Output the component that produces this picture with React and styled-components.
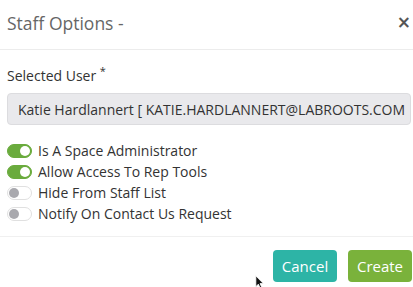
import React, { useState } from 'react';
import styled, { createGlobalStyle } from 'styled-components';

const GlobalStyle = createGlobalStyle`
  html, body {
    margin: 0;
    padding: 0;
    background: #fff;
    font-family: "Open Sans", "Liberation Sans", sans-serif;
  }
`;

const options = [
  { label: 'Is A Space Administrator', on: true },
  { label: 'Allow Access To Rep Tools', on: true },
  { label: 'Hide From Staff List', on: false },
  { label: 'Notify On Contact Us Request', on: false },
];

export default function App() {
  const [flags, setFlags] = useState(options.map((o) => o.on));

  function toggle(i) {
    setFlags(flags.map((f, idx) => (idx === i ? !f : f)));
  }

  return (
    <>
      <GlobalStyle />
      <Modal>
        <Header>
          <Title>Staff Options -</Title>
          <Close>×</Close>
        </Header>
        <Body>
          <Label>
            Selected User <Star>*</Star>
          </Label>
          <UserInput>Katie Hardlannert [ KATIE.HARDLANNERT@LABROOTS.COM</UserInput>
          <ToggleList>
            {options.map((o, i) => (
              <ToggleRow key={o.label} onClick={() => toggle(i)}>
                <Switch on={flags[i]}>
                  <Knob on={flags[i]} />
                </Switch>
                <ToggleLabel>{o.label}</ToggleLabel>
              </ToggleRow>
            ))}
          </ToggleList>
        </Body>
        <Footer>
          <Button color="#2db4a6">Cancel</Button>
          <Button color="#7ab23b">Create</Button>
          <Cursor viewBox="0 0 12 18">
            <path d="M1 1 L1 14 L4 11 L6.5 16.5 L8.5 15.6 L6 10.3 L10 10.3 Z" fill="#111" stroke="#fff" strokeWidth="1" />
          </Cursor>
        </Footer>
      </Modal>
    </>
  );
}

const Modal = styled.div`
  width: 413px;
  height: 287px;
  display: flex;
  flex-direction: column;
  background: #fff;
  overflow: hidden;
`;

const Header = styled.div`
  height: 49px;
  display: flex;
  align-items: center;
  justify-content: space-between;
  padding: 0 2px 0 7px;
  border-bottom: 1px solid #ececec;
`;

const Title = styled.h4`
  margin: 0;
  font-size: 17.5px;
  font-weight: 400;
  color: #666;
  margin-top: -3px;
`;

const Close = styled.span`
  font-family: "DejaVu Sans", sans-serif;
  font-size: 17px;
  font-weight: 700;
  color: #555;
  margin-top: -5px;
`;

const Body = styled.div`
  padding: 16px 2px 0 7px;
`;

const Label = styled.div`
  font-size: 14px;
  line-height: 20px;
  color: #333;
  margin-bottom: 7px;
`;

const Star = styled.sup`
  font-size: 11px;
  line-height: 0;
`;

const UserInput = styled.div`
  height: 32px;
  box-sizing: border-box;
  border: 1px solid #dcdcdf;
  border-radius: 4px;
  background: #e9e9ec;
  padding: 0 10px;
  display: flex;
  align-items: center;
  font-size: 14px;
  color: #333;
  white-space: nowrap;
  overflow: hidden;
`;

const ToggleList = styled.div`
  display: flex;
  flex-direction: column;
  margin-top: 15px;
`;

const ToggleRow = styled.div`
  height: 21px;
  display: flex;
  align-items: center;
  gap: 6px;
  cursor: pointer;
`;

const Switch = styled.div`
  width: 25px;
  height: 14px;
  box-sizing: border-box;
  border-radius: 7px;
  border: 1px solid ${(props) => (props.on ? '#6aab3d' : '#e0e0e0')};
  background: ${(props) => (props.on ? '#6aab3d' : '#fff')};
  display: flex;
  align-items: center;
  justify-content: ${(props) => (props.on ? 'flex-end' : 'flex-start')};
  padding: 0 1px;
`;

const Knob = styled.div`
  width: 10px;
  height: 10px;
  border-radius: 50%;
  background: ${(props) => (props.on ? '#fff' : '#a9a9ae')};
`;

const ToggleLabel = styled.span`
  font-size: 14px;
  color: #333;
`;

const Footer = styled.div`
  position: relative;
  margin-top: 12px;
  border-top: 1px solid #f0f0f0;
  padding: 13px 1px 0 0;
  display: flex;
  justify-content: flex-end;
  gap: 11px;
`;

const Button = styled.button`
  width: 64px;
  height: 32px;
  border: none;
  border-radius: 4px;
  background: ${(props) => props.color};
  color: #fff;
  font-family: "Open Sans", "Liberation Sans", sans-serif;
  font-size: 15px;
  padding: 0;
`;

const Cursor = styled.svg`
  position: absolute;
  left: 255px;
  top: 38px;
  width: 10px;
  height: 15px;
`;
